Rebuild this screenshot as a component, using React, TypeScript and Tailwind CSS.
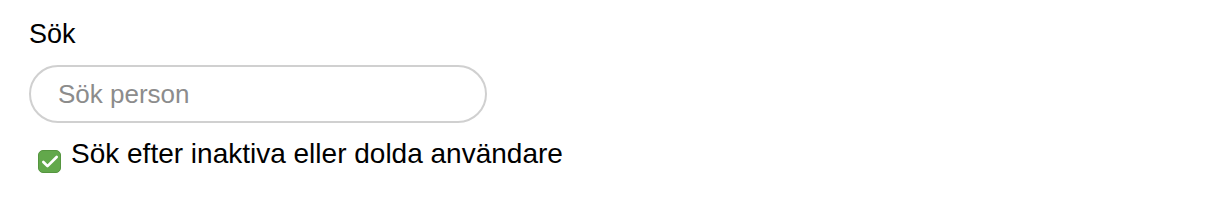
import { Check } from 'lucide-react';

export default function App() {
    return (
        <div className="min-h-[210px] w-full bg-white pl-[29px] pt-[18px] font-['Liberation_Sans',Arial,sans-serif] text-black">
            <div className="text-[27px] leading-8">Sök</div>
            <input
                type="text"
                placeholder="Sök person"
                className="mt-[15px] block h-[58px] w-[458px] rounded-full border-2 border-[#d0d0d0] bg-white px-[27px] text-[26px] text-black outline-none placeholder:text-[#8c8c8c]"
            />
            <label className="mt-[15px] flex items-start pl-[9px] text-[28px] leading-8">
                <span className="mt-[12px] mr-[10px] flex h-[23px] w-[23px] shrink-0 items-center justify-center rounded-[5px] border border-[#55953f] bg-[#62a84b]">
                    <Check className="h-[20px] w-[20px] text-white" strokeWidth={3.2} />
                </span>
                <span>Sök efter inaktiva eller dolda användare</span>
            </label>
        </div>
    );
}
